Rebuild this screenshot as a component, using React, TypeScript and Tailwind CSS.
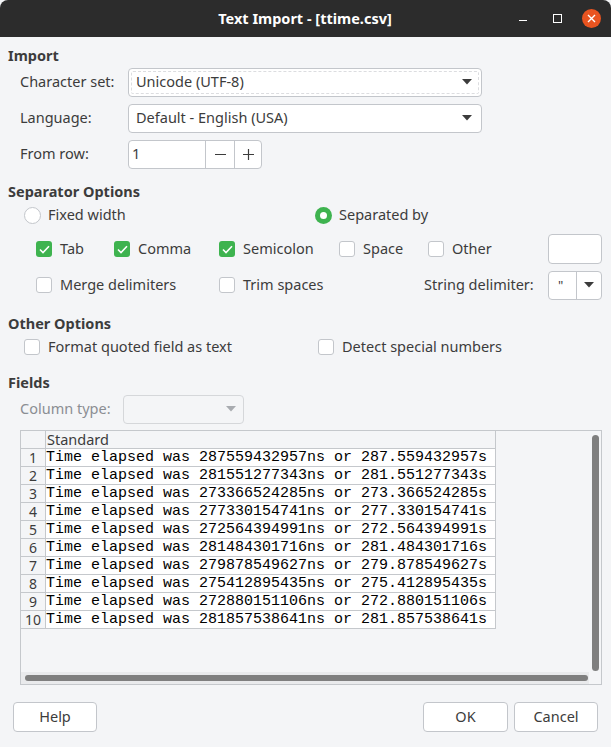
import React from 'react'

const rows = [
  ['287559432957', '287.559432957'],
  ['281551277343', '281.551277343'],
  ['273366524285', '273.366524285'],
  ['277330154741', '277.330154741'],
  ['272564394991', '272.564394991'],
  ['281484301716', '281.484301716'],
  ['279878549627', '279.878549627'],
  ['275412895435', '275.412895435'],
  ['272880151106', '272.880151106'],
  ['281857538641', '281.857538641'],
]

function Caret({ dim }: { dim?: boolean }) {
  return (
    <svg width="10" height="6" viewBox="0 0 10 6">
      <path d="M0 0 H10 L5 5.5 Z" fill={dim ? '#a8abb0' : '#3c3c3c'} />
    </svg>
  )
}

function Check({ on, label, w }: { on?: boolean; label: string; w?: string }) {
  return (
    <div className={`flex items-center ${w ?? ''}`}>
      <span
        className={`flex h-[16px] w-[16px] items-center justify-center rounded-[3px] ${
          on ? 'bg-[#3eb34f]' : 'border border-[#c3c6cb] bg-white'
        }`}
      >
        {on && (
          <svg width="11" height="9" viewBox="0 0 11 9">
            <path d="M1 4.5 L4 7.5 L10 1.2" stroke="#fff" strokeWidth="1.6" fill="none" />
          </svg>
        )}
      </span>
      <span className="ml-[8px]">{label}</span>
    </div>
  )
}

function Radio({ on, label }: { on?: boolean; label: string }) {
  return (
    <div className="flex items-center">
      <span
        className={`flex h-[17px] w-[17px] items-center justify-center rounded-full ${
          on ? 'bg-[#3eb34f]' : 'border border-[#c3c6cb] bg-white'
        }`}
      >
        {on && <span className="h-[7px] w-[7px] rounded-full bg-white" />}
      </span>
      <span className="ml-[7px]">{label}</span>
    </div>
  )
}

function Heading({ children, mt }: { children: React.ReactNode; mt: string }) {
  return <div className={`${mt} h-[20px] pl-[8px] font-bold leading-[22px]`}>{children}</div>
}

export default function App() {
  return (
    <div
      className="flex h-[747px] w-[611px] flex-col bg-[#f4f5f7] text-[14.5px] text-[#3c3c3c]"
      style={{ fontFamily: '"Noto Sans", sans-serif' }}
    >
      {/* title bar */}
      <div className="flex h-[37px] shrink-0 items-center rounded-t-[8px] bg-[#2c2c2c]">
        <div className="w-[500px] pl-[110px] text-center text-[14.5px] font-bold text-white">
          Text Import - [ttime.csv]
        </div>
        <div className="flex flex-1 items-center">
          <span className="ml-[19px] mt-[4px] h-[1.5px] w-[8px] bg-white" />
          <span className="ml-[26px] h-[9px] w-[9px] border border-white" />
          <span className="ml-[20px] flex h-[19px] w-[19px] items-center justify-center rounded-full bg-[#e95420]">
            <svg width="9" height="9" viewBox="0 0 9 9">
              <path d="M1 1 L8 8 M8 1 L1 8" stroke="#fff" strokeWidth="1.4" />
            </svg>
          </span>
        </div>
      </div>

      {/* Import */}
      <Heading mt="mt-[7px]">Import</Heading>
      <div className="mt-[4px] flex flex-col gap-[8px] pl-[20px]">
        <div className="flex h-[28px] items-center">
          <span className="w-[108px]">Character set:</span>
          <div className="flex h-[29px] w-[354px] items-center justify-between rounded-[4px] border border-[#c3c6cb] bg-white p-[2px]">
            <div className="flex h-full flex-1 items-center justify-between rounded-[2px] border border-dashed border-[#dcdde0] pl-[4px] pr-[6px]">
              <span>Unicode (UTF-8)</span>
              <Caret />
            </div>
          </div>
        </div>
        <div className="flex h-[28px] items-center">
          <span className="w-[108px]">Language:</span>
          <div className="flex h-[29px] w-[354px] items-center justify-between rounded-[4px] border border-[#c3c6cb] bg-white pl-[7px] pr-[9px]">
            <span>Default - English (USA)</span>
            <Caret />
          </div>
        </div>
        <div className="flex h-[28px] items-center">
          <span className="w-[108px]">From row:</span>
          <div className="flex h-[29px] overflow-hidden rounded-[4px] border border-[#c3c6cb] bg-white">
            <span className="flex w-[76px] items-center pl-[3px]">1</span>
            <span className="flex w-[29px] items-center justify-center border-l border-[#c3c6cb]">
              <svg width="11" height="11" viewBox="0 0 11 11"><path d="M0 5.5 H11" stroke="#3c3c3c" strokeWidth="1.2" /></svg>
            </span>
            <span className="flex w-[27px] items-center justify-center border-l border-[#c3c6cb]">
              <svg width="11" height="11" viewBox="0 0 11 11"><path d="M0 5.5 H11 M5.5 0 V11" stroke="#3c3c3c" strokeWidth="1.2" /></svg>
            </span>
          </div>
        </div>
      </div>

      {/* Separator Options */}
      <Heading mt="mt-[12px]">Separator Options</Heading>
      <div className="mt-[3px] flex h-[24px] items-center pl-[24px]">
        <div className="w-[291px]">
          <Radio label="Fixed width" />
        </div>
        <Radio on label="Separated by" />
      </div>
      <div className="mt-[7px] flex h-[30px] items-center pl-[36px]">
        <Check on label="Tab" w="w-[78px]" />
        <Check on label="Comma" w="w-[105px]" />
        <Check on label="Semicolon" w="w-[120px]" />
        <Check label="Space" w="w-[89px]" />
        <Check label="Other" w="w-[120px]" />
        <div className="h-[30px] w-[54px] rounded-[4px] border border-[#c3c6cb] bg-white" />
      </div>
      <div className="mt-[7px] flex h-[28px] items-center pl-[36px]">
        <Check label="Merge delimiters" w="w-[183px]" />
        <Check label="Trim spaces" w="w-[205px]" />
        <span className="w-[124px]">String delimiter:</span>
        <div className="flex h-[29px] w-[54px] rounded-[4px] border border-[#c3c6cb] bg-white">
          <span className="flex w-[27px] items-center pl-[9px] pt-[1px] text-[13px]">"</span>
          <span className="flex flex-1 items-center justify-center border-l border-[#c3c6cb]">
            <Caret />
          </span>
        </div>
      </div>

      {/* Other Options */}
      <Heading mt="mt-[13px]">Other Options</Heading>
      <div className="mt-[3px] flex h-[24px] items-center pl-[24px]">
        <Check label="Format quoted field as text" w="w-[294px]" />
        <Check label="Detect special numbers" />
      </div>

      {/* Fields */}
      <Heading mt="mt-[12px]">Fields</Heading>
      <div className="mt-[4px] flex h-[28px] items-center pl-[20px]">
        <span className="w-[103px] text-[#8b8e93]">Column type:</span>
        <div className="flex h-[29px] w-[121px] items-center justify-end rounded-[4px] border border-[#d5d7da] pr-[7px]">
          <Caret dim />
        </div>
      </div>

      <div className="relative ml-[20px] mt-[7px] h-[255px] w-[582px] overflow-hidden border border-[#c5c8cc] bg-[#f4f5f7]">
        <div className="w-[475px] text-[15px] leading-[17px]">
          <div className="flex h-[18px] border-b border-[#c5c8cc]">
            <span className="w-[25px] border-r border-[#c5c8cc]" />
            <span className="flex-1 border-r border-[#c5c8cc] pl-[1px] text-[14.5px] leading-[17px]">Standard</span>
          </div>
          {rows.map((r, i) => (
            <div key={i} className="flex h-[18px] border-b border-[#c5c8cc]">
              <span className="flex w-[25px] items-end justify-center border-r border-[#c5c8cc] text-[14px] leading-[16px]">{i + 1}</span>
              <span
                className="flex-1 border-r border-[#c5c8cc] bg-white text-black"
                style={{ fontFamily: '"Liberation Mono", monospace' }}
              >
                Time elapsed was {r[0]}ns or {r[1]}s
              </span>
            </div>
          ))}
        </div>
        {/* scrollbars */}
        <div className="absolute right-[2px] top-[4px] h-[236px] w-[7px] rounded-full bg-[#7f7f7f]" />
        <div className="absolute bottom-0 left-0 h-[12px] w-[569px] bg-[#e9eaec]" />
        <div className="absolute bottom-[3px] left-[4px] h-[6px] w-[563px] rounded-full bg-[#7f7f7f]" />
        <div className="absolute bottom-0 right-0 h-[12px] w-[12px] bg-[#f4f5f7]" />
      </div>

      {/* buttons */}
      <div className="mt-[17px] flex h-[30px] px-[13px]">
        <button className="h-[30px] w-[84px] rounded-[4px] border border-[#c3c6cb] bg-white">Help</button>
        <div className="flex-1" />
        <button className="h-[30px] w-[85px] rounded-[4px] border border-[#c3c6cb] bg-white">OK</button>
        <button className="ml-[6px] h-[30px] w-[84px] rounded-[4px] border border-[#c3c6cb] bg-white">Cancel</button>
      </div>
    </div>
  )
}
